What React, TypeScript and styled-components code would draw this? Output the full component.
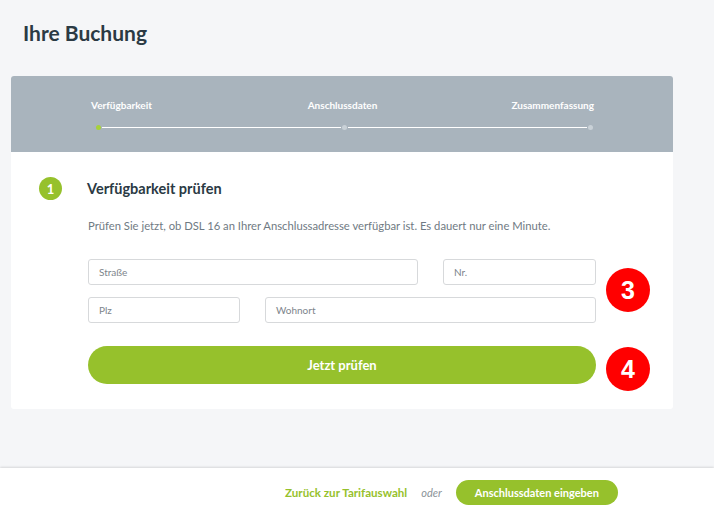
import React from "react";
import styled, { createGlobalStyle } from "styled-components";

const Global = createGlobalStyle`
  html, body { margin: 0; padding: 0; }
  body {
    background: #f5f6f8;
    font-family: Lato, "Open Sans", sans-serif;
    color: #2b3a44;
    width: 714px;
    height: 517px;
    overflow: hidden;
  }
`;

const Page = styled.div`
  display: flex;
  flex-direction: column;
  height: 517px;
`;

const Main = styled.main`
  flex: 1;
  padding: 20px 41px 0 11px;
`;

const Title = styled.h1`
  margin: 0 0 30px 12px;
  font-size: 21px;
  line-height: 26px;
  font-weight: 700;
  color: #2b3a44;
`;

const Card = styled.section`
  background: #fff;
  border-radius: 3px;
  overflow: hidden;
`;

const StepHeader = styled.div`
  background: #a9b4bd;
  height: 76px;
  padding: 22px 79px 0 80px;
  box-sizing: border-box;
`;

const StepLabels = styled.div`
  display: grid;
  grid-template-columns: 1fr auto 1fr;
  font-size: 10px;
  font-weight: 700;
  color: #fff;
  line-height: 14px;
`;

const StepLabel = styled.span<{ $align: string }>`
  justify-self: ${(p) => p.$align};
`;

const Track = styled.div`
  height: 5px;
  margin: 13px 0 0 4px;
  display: flex;
  align-items: center;
`;

const Line = styled.div`
  flex: 1;
  height: 1px;
  background: #fff;
`;

const Dot = styled.span<{ $active?: boolean }>`
  width: 5px;
  height: 5px;
  border-radius: 50%;
  background: ${(p) => (p.$active ? "#a7d13a" : "#c9d1d7")};
  flex: none;
  margin: 0 1px;
`;

const Body = styled.div`
  padding: 25px 77px 25px 28px;
  position: relative;
`;

const HeadRow = styled.div`
  display: flex;
  align-items: center;
  gap: 25px;
`;

const Num = styled.span`
  width: 23px;
  height: 23px;
  border-radius: 50%;
  background: #96c12c;
  color: #fff;
  font-size: 13px;
  font-weight: 700;
  display: flex;
  align-items: center;
  justify-content: center;
`;

const H2 = styled.h2`
  margin: 0;
  font-size: 14.5px;
  font-weight: 700;
  color: #2b3a44;
`;

const Content = styled.div`
  padding-left: 49px;
`;

const Desc = styled.p`
  margin: 19px 0 26px;
  font-size: 11.25px;
  color: #6f7a83;
  line-height: 14px;
`;

const Grid = styled.div`
  display: grid;
  grid-template-columns: 152px 25px 153px 25px 153px;
  grid-row-gap: 12px;
`;

const Field = styled.div<{ $col: string }>`
  grid-column: ${(p) => p.$col};
  height: 26px;
  border: 1px solid #d7d9db;
  border-radius: 3px;
  box-sizing: border-box;
  background: #fff;
  font-size: 10px;
  color: #7d858b;
  display: flex;
  align-items: center;
  padding-left: 10px;
`;

const Primary = styled.button`
  margin-top: 23px;
  width: 508px;
  height: 38px;
  border: none;
  border-radius: 19px;
  background: #96c12c;
  color: #fff;
  font-family: inherit;
  font-size: 13px;
  font-weight: 700;
  display: block;
`;

const Badge = styled.span<{ $top: number }>`
  position: absolute;
  left: 595px;
  top: ${(p) => p.$top}px;
  width: 44px;
  height: 44px;
  border-radius: 50%;
  background: #f00;
  color: #fff;
  font-family: "Liberation Sans", Arial, sans-serif;
  font-weight: 700;
  font-size: 25px;
  display: flex;
  align-items: center;
  justify-content: center;
`;

const Footer = styled.footer`
  height: 49px;
  background: #fff;
  box-shadow: 0 -1px 2px rgba(0, 0, 0, 0.12);
  display: flex;
  align-items: center;
  padding-left: 285px;
  gap: 14px;
`;

const Back = styled.a`
  color: #96c12c;
  font-weight: 700;
  font-size: 11.6px;
`;

const Or = styled.span`
  font-style: italic;
  font-size: 11px;
  color: #8a9298;
`;

const Next = styled.button`
  height: 25px;
  padding: 0 19px;
  border: none;
  border-radius: 13px;
  background: #96c12c;
  color: #fff;
  font-family: inherit;
  font-size: 11px;
  font-weight: 700;
`;

export default function App() {
  return (
    <>
      <Global />
      <Page>
        <Main>
          <Title>Ihre Buchung</Title>
          <Card>
            <StepHeader>
              <StepLabels>
                <StepLabel $align="start">Verfügbarkeit</StepLabel>
                <StepLabel $align="center">Anschlussdaten</StepLabel>
                <StepLabel $align="end">Zusammenfassung</StepLabel>
              </StepLabels>
              <Track>
                <Dot $active />
                <Line />
                <Dot />
                <Line />
                <Dot />
              </Track>
            </StepHeader>
            <Body>
              <HeadRow>
                <Num>1</Num>
                <H2>Verfügbarkeit prüfen</H2>
              </HeadRow>
              <Content>
                <Desc>
                  Prüfen Sie jetzt, ob DSL 16 an Ihrer Anschlussadresse verfügbar ist. Es dauert nur eine Minute.
                </Desc>
                <Grid>
                  <Field $col="1 / 4">Straße</Field>
                  <Field $col="5 / 6">Nr.</Field>
                  <Field $col="1 / 2">Plz</Field>
                  <Field $col="3 / 6">Wohnort</Field>
                </Grid>
                <Primary>Jetzt prüfen</Primary>
              </Content>
              <Badge $top={116}>3</Badge>
              <Badge $top={195}>4</Badge>
            </Body>
          </Card>
        </Main>
        <Footer>
          <Back>Zurück zur Tarifauswahl</Back>
          <Or>oder</Or>
          <Next>Anschlussdaten eingeben</Next>
        </Footer>
      </Page>
    </>
  );
}
